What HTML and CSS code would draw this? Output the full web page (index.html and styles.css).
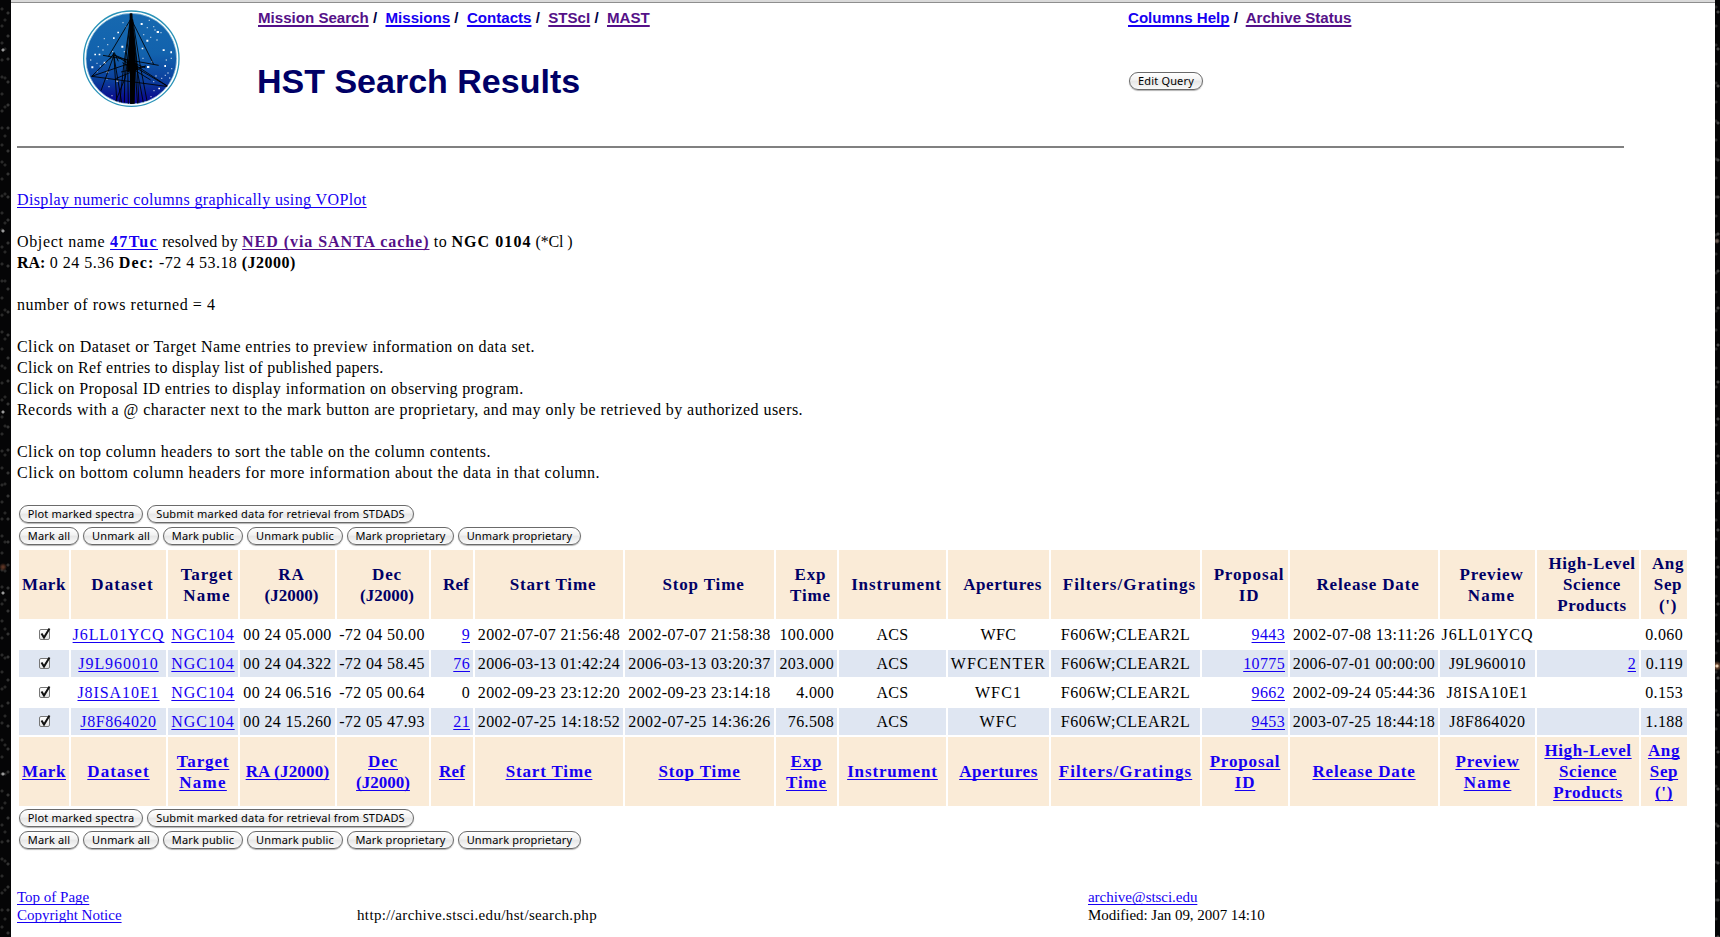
FILE: index.html
```html
<!DOCTYPE html>
<html lang="en">
<head>
<meta charset="utf-8">
<title>HST Search Results</title>
<link rel="stylesheet" href="styles.css">
</head>
<body>
<div class="page">
  <header class="header">
    <svg class="logo" viewBox="0 0 318 318" width="106" height="106" aria-label="MAST">
      <defs>
        <linearGradient id="sky" x1="0" y1="0" x2="0" y2="1">
          <stop offset="0" stop-color="#1769b0"/><stop offset=".45" stop-color="#1262ad"/>
          <stop offset=".75" stop-color="#0b3d9c"/><stop offset=".9" stop-color="#0a1690"/><stop offset="1" stop-color="#0a0496"/>
        </linearGradient>
        <clipPath id="disc"><circle cx="157" cy="158" r="136"/></clipPath>
      </defs>
      <circle cx="157" cy="158" r="143" fill="#fff" stroke="#2a93b8" stroke-width="4"/>
      <circle cx="157" cy="158" r="136" fill="url(#sky)" stroke="#9fd0e2" stroke-width="2"/>
      <g clip-path="url(#disc)">
        <g fill="#fff">
          <path d="M185 51h6v6h-6zM202 101h6v6h-6zM233 75h7v6h-7zM115 77h5v5h-5zM102 94h5v5h-5zM127 119h6v6h-6zM46 143h5v5h-5zM59 143h5v5h-5zM74 167h6v6h-6zM37 181h6v6h-6zM204 180h7v6h-7zM251 130h6v5h-6zM274 136h5v6h-5zM256 177h5v6h-5zM238 245h5v5h-5zM83 196h5v5h-5zM113 223h5v5h-5zM188 125h5v5h-5z"/>
          <path opacity=".6" d="M209 41h4v4h-4zM222 60h4v4h-4zM244 78h4v4h-4zM130 48h4v4h-4zM74 96h4v4h-4zM84 114h4v4h-4zM52 170h4v4h-4zM33 160h4v4h-4zM56 120h4v4h-4zM62 178h4v4h-4zM52 195h4v4h-4zM232 100h4v4h-4zM226 70h4v4h-4zM192 84h4v4h-4zM203 63h4v4h-4zM213 92h4v4h-4zM275 155h4v4h-4zM260 160h4v4h-4zM265 199h4v4h-4zM276 186h4v4h-4zM257 206h4v4h-4zM229 208h4v4h-4zM246 215h4v4h-4zM270 214h4v4h-4zM222 225h4v4h-4zM88 240h4v4h-4zM97 267h4v4h-4zM82 217h4v4h-4zM217 165h4v4h-4zM190 155h4v4h-4zM134 135h4v4h-4zM99 135h4v4h-4zM214 270h4v4h-4zM223 252h4v4h-4zM140 60h4v4h-4zM70 130h4v4h-4z"/>
        </g>
        <g fill="none" stroke="#000" stroke-width="2.6">
          <path d="M156 38L88 152M156 38L224 175M72 148L239 178M38 211L268 242M38 211L104 146L268 242M38 211L158 170L268 242M104 140L114 295M104 150L66 254M104 146L128 290M92 160L106 140L118 166"/>
          <path d="M155 38L138 180L136 290M154 40L134 180L122 292M156 40L146 170L148 298M160 40L174 170L180 298M161 40L182 170L204 285M159 50L176 200L193 290M158 60L139 215L108 290M164 80L172 240L176 298M104 146L200 186M126 198L200 180L110 218M130 170L215 222"/>
        </g>
        <path d="M152 20h8l4 68 6 80-3 130h-14l0-120-5-10 4-78zM144 165l29 6 4 20-32 8z"/>
      </g>
    </svg>
    <div class="title-block">
      <nav class="nav"><a class="visited" href="#">Mission Search</a> /&nbsp; <a href="#">Missions</a> /&nbsp; <a href="#">Contacts</a> /&nbsp; <a class="visited" href="#">STScI</a> /&nbsp; <a class="visited" href="#">MAST</a></nav>
      <h1 class="title">HST Search Results</h1>
    </div>
    <div class="side-block">
      <nav class="nav"><a href="#">Columns Help</a> /&nbsp; <a class="visited" href="#">Archive Status</a></nav>
      <button class="btn btn-edit">Edit Query</button>
    </div>
  </header>
  <hr class="rule">

  <main>
    <div class="intro">
      <p><a class="t37" href="#">Display numeric columns graphically using VOPlot</a></p>
      <p><span class="t64">Object name </span><a class="b136" href="#">47Tuc</a><span class="t14"> resolved by </span><a class="visited b95" href="#">NED (via SANTA cache)</a><span class="t39"> to </span><b class="b105">NGC 0104</b><span class="tn25"> (*Cl )</span><br>
      <b class="b0">RA:</b><span class="t45"> 0 24 5.36 </span><b class="b120">Dec:</b><span class="t44"> -72 4 53.18 </span><b class="b48">(J2000)</b></p>
      <p class="t53">number of rows returned = 4</p>
      <p><span class="t44">Click on Dataset or Target Name entries to preview information on data set.</span><br>
      <span class="t26">Click on Ref entries to display list of published papers.</span><br>
      <span class="t39">Click on Proposal ID entries to display information on observing program.</span><br>
      <span class="t44">Records with a @ character next to the mark button are proprietary, and may only be retrieved by authorized users.</span></p>
      <p><span class="t43">Click on top column headers to sort the table on the column contents.</span><br>
      <span class="t49">Click on bottom column headers for more information about the data in that column.</span></p>
    </div>

    <div class="actions">
      <div class="row"><button class="btn w-plot">Plot marked spectra</button><button class="btn w-submit">Submit marked data for retrieval from STDADS</button></div>
      <div class="row"><button class="btn w-ma">Mark all</button><button class="btn w-ua">Unmark all</button><button class="btn w-mp">Mark public</button><button class="btn w-up">Unmark public</button><button class="btn w-mpr">Mark proprietary</button><button class="btn w-upr">Unmark proprietary</button></div>
    </div>

    <table class="results">
      <colgroup><col class="c-mark"><col class="c-data"><col class="c-target"><col class="c-ra"><col class="c-dec"><col class="c-ref"><col class="c-start"><col class="c-stop"><col class="c-exp"><col class="c-inst"><col class="c-ap"><col class="c-filt"><col class="c-prop"><col class="c-rel"><col class="c-prev"><col class="c-hl"><col class="c-ang"></colgroup>
      <thead>
        <tr>
          <th class="mark s6">Mark</th><th class="s11">Dataset</th><th>Target<br><span class="s13">Name</span></th><th>RA<br><span class="s0">(J2000)</span></th><th>Dec<br><span class="s0">(J2000)</span></th><th class="s3">Ref</th><th>Start Time</th><th>Stop Time</th><th>Exp<br>Time</th><th>Instrument</th><th class="s6">Apertures</th><th class="s11">Filters/Gratings</th><th>Proposal<br>ID</th><th>Release Date</th><th>Preview<br><span class="s13">Name</span></th><th class="s6">High-Level<br>Science<br>Products</th><th class="s6">Ang<br>Sep<br>(')</th>
        </tr>
      </thead>
      <tbody>
        <tr>
          <td><span class="check"><svg viewBox="0 0 14 14" width="14" height="14"><path d="M3.5 6.5L6 10.5L11.5 1.5" fill="none" stroke="#111" stroke-width="2"/></svg></span></td><td class="l9"><a href="#">J6LL01YCQ</a></td><td class="l9"><a href="#">NGC104</a></td><td>00 24 05.000</td><td class="dec">-72 04 50.00</td><td class="num"><a href="#">9</a></td><td>2002-07-07 21:56:48</td><td>2002-07-07 21:58:38</td><td class="num">100.000</td><td>ACS</td><td>WFC</td><td class="l6">F606W;CLEAR2L</td><td class="num"><a href="#">9443</a></td><td>2002-07-08 13:11:26</td><td class="l9">J6LL01YCQ</td><td></td><td class="num ang">0.060</td>
        </tr>
        <tr class="alt">
          <td><span class="check"><svg viewBox="0 0 14 14" width="14" height="14"><path d="M3.5 6.5L6 10.5L11.5 1.5" fill="none" stroke="#111" stroke-width="2"/></svg></span></td><td class="l9"><a href="#">J9L960010</a></td><td class="l9"><a href="#">NGC104</a></td><td>00 24 04.322</td><td class="dec">-72 04 58.45</td><td class="num"><a href="#">76</a></td><td>2006-03-13 01:42:24</td><td>2006-03-13 03:20:37</td><td class="num">203.000</td><td>ACS</td><td class="l11">WFCENTER</td><td class="l6">F606W;CLEAR2L</td><td class="num"><a href="#">10775</a></td><td>2006-07-01 00:00:00</td><td class="l6">J9L960010</td><td class="num"><a href="#">2</a></td><td class="num ang">0.119</td>
        </tr>
        <tr>
          <td><span class="check"><svg viewBox="0 0 14 14" width="14" height="14"><path d="M3.5 6.5L6 10.5L11.5 1.5" fill="none" stroke="#111" stroke-width="2"/></svg></span></td><td class="l9"><a href="#">J8ISA10E1</a></td><td class="l9"><a href="#">NGC104</a></td><td>00 24 06.516</td><td class="dec">-72 05 00.64</td><td class="num">0</td><td>2002-09-23 23:12:20</td><td>2002-09-23 23:14:18</td><td class="num">4.000</td><td>ACS</td><td class="l11">WFC1</td><td class="l6">F606W;CLEAR2L</td><td class="num"><a href="#">9662</a></td><td>2002-09-24 05:44:36</td><td class="l9">J8ISA10E1</td><td></td><td class="num ang">0.153</td>
        </tr>
        <tr class="alt">
          <td><span class="check"><svg viewBox="0 0 14 14" width="14" height="14"><path d="M3.5 6.5L6 10.5L11.5 1.5" fill="none" stroke="#111" stroke-width="2"/></svg></span></td><td class="l6"><a href="#">J8F864020</a></td><td class="l9"><a href="#">NGC104</a></td><td>00 24 15.260</td><td class="dec">-72 05 47.93</td><td class="num"><a href="#">21</a></td><td>2002-07-25 14:18:52</td><td>2002-07-25 14:36:26</td><td class="num">76.508</td><td>ACS</td><td class="l11">WFC</td><td class="l6">F606W;CLEAR2L</td><td class="num"><a href="#">9453</a></td><td>2003-07-25 18:44:18</td><td class="l6">J8F864020</td><td></td><td class="num ang">1.188</td>
        </tr>
      </tbody>
      <tfoot>
        <tr>
          <th class="s6"><a href="#">Mark</a></th><th class="s11"><a href="#">Dataset</a></th><th><a href="#">Target<br><span class="s13">Name</span></a></th><th class="s3"><a href="#">RA (J2000)</a></th><th><a href="#">Dec<br><span class="s0">(J2000)</span></a></th><th class="s3"><a href="#">Ref</a></th><th><a href="#">Start Time</a></th><th><a href="#">Stop Time</a></th><th><a href="#">Exp<br>Time</a></th><th><a href="#">Instrument</a></th><th class="s6"><a href="#">Apertures</a></th><th class="s11"><a href="#">Filters/Gratings</a></th><th><a href="#">Proposal<br>ID</a></th><th><a href="#">Release Date</a></th><th><a href="#">Preview<br><span class="s13">Name</span></a></th><th class="s6"><a href="#">High-Level<br>Science<br>Products</a></th><th class="s6"><a href="#">Ang<br>Sep<br>(')</a></th>
        </tr>
      </tfoot>
    </table>

    <div class="actions actions-bottom">
      <div class="row"><button class="btn w-plot">Plot marked spectra</button><button class="btn w-submit">Submit marked data for retrieval from STDADS</button></div>
      <div class="row"><button class="btn w-ma">Mark all</button><button class="btn w-ua">Unmark all</button><button class="btn w-mp">Mark public</button><button class="btn w-up">Unmark public</button><button class="btn w-mpr">Mark proprietary</button><button class="btn w-upr">Unmark proprietary</button></div>
    </div>
  </main>

  <footer class="footer">
    <div><a href="#">Top of Page</a><br><a href="#">Copyright Notice</a></div>
    <div class="url">http://archive.stsci.edu/hst/search.php</div>
    <div class="contact"><a href="#">archive@stsci.edu</a><br>Modified: Jan 09, 2007 14:10</div>
  </footer>
</div>
</body>
</html>
```
FILE: styles.css
```css
* { box-sizing: border-box; }

/* Starry desktop visible on both sides of the window */
body {
  margin: 0;
  height: 937px;
  overflow: hidden;
  background:
    radial-gradient(circle at 1717px 666px, #e8cdb0 0 1px, #6b4a35 2px, transparent 5px),
    radial-gradient(circle at 1717px 241px, #6a5c54 0 1px, transparent 3px),
    radial-gradient(circle at 3px 567px, #5b3424 0 1px, transparent 4px),
    radial-gradient(circle at 3px 50px, #999 0 1px, transparent 2px) 0 0 / 1720px 181px,
    radial-gradient(circle at 8px 13px, #333 0 1px, transparent 2px) 0 0 / 1720px 23px,
    radial-gradient(circle at 2px 9px, #2a2a2a 0 1px, transparent 2px) 0 0 / 1720px 17px,
    radial-gradient(circle at 5px 20px, #282828 0 1px, transparent 2px) 0 0 / 1720px 29px,
    radial-gradient(circle at 1718px 12px, #444 0 1px, transparent 2px) 0 0 / 1720px 37px,
    radial-gradient(circle at 1716px 7px, #2a2a2a 0 1px, transparent 2px) 0 0 / 1720px 19px,
    #050506;
}

.page {
  width: 1704px;
  height: 937px;
  margin-left: 11px;
  padding-left: 6px;
  background: #fff;
  border-top: 2px solid #dadada;
  box-shadow: inset 0 1px #8e8e8e;
  font: 16px/21px "Liberation Serif", "Times New Roman", serif;
  color: #000;
}

a { color: #1600f2; text-decoration: underline; text-underline-offset: 2px; text-decoration-thickness: 1px; text-decoration-skip-ink: none; }
a.visited { color: #551188; }

.header {
  display: grid;
  grid-template-columns: 241px 870px 1fr;
  height: 144px;
}
.logo { margin: 4px 0 0 61.5px; }
.nav {
  padding-top: 7px;
  font: bold 15.1px/18px "Liberation Sans", Arial, sans-serif;
  color: #000044;
  white-space: nowrap;
}
.nav a { text-decoration-thickness: 2px; text-underline-offset: 2px; }
.title {
  margin: 34px 0 0 -1px;
  font: bold 34px/40px "Liberation Sans", Arial, sans-serif;
  color: #000066;
}
.btn-edit { display: block; width: 74px; margin: 45px 0 0 1px; }

.rule { width: 1607px; height: 2px; margin: 0; border: 0; background: #808080; }

.intro { padding-top: 41px; white-space: nowrap; }
.intro p { margin: 0 0 21px; }
.t14 { letter-spacing: .14px; }
.t26 { letter-spacing: .255px; }
.t37 { letter-spacing: .375px; }
.t39 { letter-spacing: .395px; }
.t43 { letter-spacing: .435px; }
.t44 { letter-spacing: .442px; }
.t45 { letter-spacing: .5px; }
.t49 { letter-spacing: .5px; }
.t53 { letter-spacing: .55px; }
.t64 { letter-spacing: .642px; }
.tn25 { letter-spacing: -.1px; }
.b0, .b48, .b95, .b105, .b120, .b136 { font-weight: bold; }
.b0 { letter-spacing: -.1px; }
.b48 { letter-spacing: .478px; }
.b95 { letter-spacing: .96px; }
.b105 { letter-spacing: 1.056px; }
.b120 { letter-spacing: 1.229px; }
.b136 { letter-spacing: 1.359px; }

.actions { display: grid; gap: 4px; padding: 1px 0 0 2px; }
.row { display: flex; gap: 4px; height: 18px; }
.btn {
  height: 18px;
  padding: 0;
  border: 1px solid #6a6a6a;
  border-radius: 9px;
  background: linear-gradient(#fff, #f2f2f2 45%, #e6e6e6 50%, #fafafa);
  box-shadow: 0 1px 1px rgba(0, 0, 0, .3);
  font: 11px/14px "Noto Sans", "Open Sans", sans-serif;
  letter-spacing: .15px;
  color: #000;
  white-space: nowrap;
}
.w-plot { width: 124px; }
.w-submit { width: 267px; letter-spacing: .19px; }
.w-ma { width: 60px; }
.w-ua { width: 76px; }
.w-mp { width: 80px; }
.w-up { width: 96px; }
.w-mpr { width: 107px; }
.w-upr { width: 123px; }

.results {
  width: 1672px;
  margin-top: 3px;
  table-layout: fixed;
  border-collapse: separate;
  border-spacing: 2px;
}
.results th, .results td { padding: 3px 0; text-align: center; white-space: nowrap; }
.results th { height: 69px; background: #faebd7; color: #000066; font-size: 17px; letter-spacing: .85px; }
.results thead th { padding-left: 8px; }
.results thead th.mark { padding-left: 0; }
.results td { height: 27px; letter-spacing: .36px; }
.results td.num { padding-right: 3px; text-align: right; }
.results td.dec { padding-right: 2px; }
.results td.ang { padding-right: 4px; }
.results td.l6 { letter-spacing: .57px; }
.results td.l9 { letter-spacing: .92px; }
.results td.l11 { letter-spacing: 1.13px; }
.alt td { background: #dfe6f2; }
.results .s0 { letter-spacing: 0; }
.results .s3 { letter-spacing: .2px; }
.results .s6 { letter-spacing: .6px; }
.results .s11 { letter-spacing: 1.08px; }
.results .s13 { letter-spacing: 1.3px; }

.c-mark { width: 50px; }
.c-data { width: 95px; }
.c-target { width: 70px; }
.c-ra { width: 95px; }
.c-dec { width: 92px; }
.c-ref { width: 42px; }
.c-start { width: 148px; }
.c-stop { width: 149px; }
.c-exp { width: 61px; }
.c-inst { width: 107px; }
.c-ap { width: 101px; }
.c-filt { width: 149px; }
.c-prop { width: 86px; }
.c-rel { width: 148px; }
.c-prev { width: 95px; }
.c-hl { width: 102px; }
.c-ang { width: 46px; }

.check {
  display: block;
  width: 11px;
  height: 11px;
  margin: 0 0 0 20px;
  border: 1px solid #777;
  border-radius: 2px;
  background: linear-gradient(#fff, #e4e4e4);
}
.check svg { display: block; margin: -3px 0 0 -2px; }

.footer {
  display: grid;
  grid-template-columns: 340px 731px 1fr;
  align-items: end;
  padding-top: 39px;
  font-size: 15px;
  line-height: 18px;
}
.url { letter-spacing: .354px; }
.contact { letter-spacing: -.04px; }
```
